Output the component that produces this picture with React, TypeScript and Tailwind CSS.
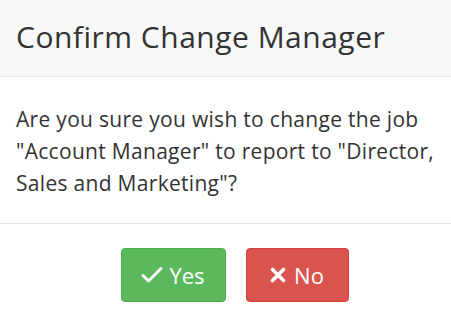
export default function App() {
  return (
    <div className="w-[451px] h-[311px] overflow-hidden bg-white text-[#333] font-['Open_Sans',sans-serif]">
      <div className="h-[77px] bg-[#f8f8f8] border-b border-[#ececec] flex items-center px-4 pb-[3px]">
        <h1 className="text-[30px] leading-none tracking-[0.5px]">Confirm Change Manager</h1>
      </div>
      <div className="h-[147px] border-b border-[#e5e5e5] pl-4 pr-2 pt-[26px]">
        <p className="text-[21px] leading-[32px] tracking-[0.3px]">
          Are you sure you wish to change the job "Account Manager" to report to "Director, Sales and Marketing"?
        </p>
      </div>
      <div className="flex justify-center gap-5 pt-[24px] pl-[18px] bg-white h-full">
        <button className="w-[105px] h-[54px] rounded-[4px] bg-[#5cb85c] border border-[#4cae4c] text-white text-[22px] flex items-center justify-center gap-[6px]">
          <svg width="22" height="18" viewBox="0 0 22 18" fill="none">
            <path d="M2 9.5 L7.5 15 L20 2.5" stroke="white" strokeWidth="3" strokeLinecap="round" strokeLinejoin="round" />
          </svg>
          Yes
        </button>
        <button className="w-[103px] h-[54px] rounded-[4px] bg-[#d9534f] border border-[#d43f3a] text-white text-[22px] flex items-center justify-center gap-[8px]">
          <svg width="16" height="16" viewBox="0 0 16 16" fill="none">
            <path d="M2.5 2.5 L13.5 13.5 M13.5 2.5 L2.5 13.5" stroke="white" strokeWidth="3.6" strokeLinecap="round" />
          </svg>
          No
        </button>
      </div>
    </div>
  );
}
